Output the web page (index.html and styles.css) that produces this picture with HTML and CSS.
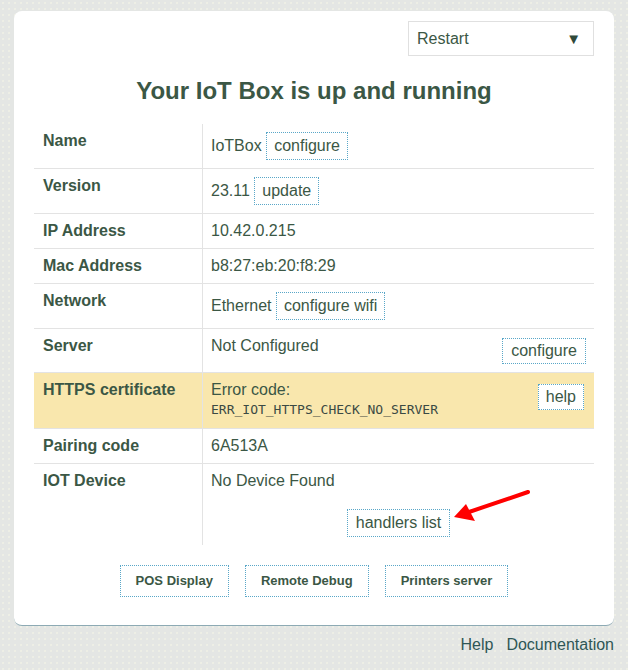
FILE: index.html
```html
<!DOCTYPE html>
<html>
<head>
<meta charset="utf-8">
<link rel="stylesheet" href="styles.css">
</head>
<body>
<div class="card">
  <div class="top">
    <div class="select"><span>Restart</span><span class="caret">▼</span></div>
  </div>
  <h1 class="title">Your IoT Box is up and running</h1>
  <div class="table">
    <div class="row">
      <div class="label">Name</div>
      <div class="val">IoTBox <span class="btn">configure</span></div>
    </div>
    <div class="row">
      <div class="label">Version</div>
      <div class="val">23.11 <span class="btn">update</span></div>
    </div>
    <div class="row">
      <div class="label">IP Address</div>
      <div class="val">10.42.0.215</div>
    </div>
    <div class="row">
      <div class="label">Mac Address</div>
      <div class="val">b8:27:eb:20:f8:29</div>
    </div>
    <div class="row">
      <div class="label">Network</div>
      <div class="val">Ethernet <span class="btn">configure wifi</span></div>
    </div>
    <div class="row">
      <div class="label">Server</div>
      <div class="val"><span class="btn right">configure</span>Not Configured</div>
    </div>
    <div class="row warn">
      <div class="label">HTTPS certificate</div>
      <div class="val"><span class="btn right help">help</span>Error code:<code class="code">ERR_IOT_HTTPS_CHECK_NO_SERVER</code></div>
    </div>
    <div class="row">
      <div class="label">Pairing code</div>
      <div class="val">6A513A</div>
    </div>
    <div class="row last">
      <div class="label">IOT Device</div>
      <div class="val">No Device Found<div class="center"><span class="btn wide">handlers list</span></div></div>
    </div>
  </div>
  <div class="actions">
    <span class="abtn">POS Display</span>
    <span class="abtn">Remote Debug</span>
    <span class="abtn">Printers server</span>
  </div>
</div>
<div class="footer"><a class="link">Help</a><a class="link">Documentation</a></div>
<svg class="arrow" width="90" height="45" viewBox="0 0 90 45">
  <line x1="78" y1="7" x2="16" y2="28" stroke="#ff0000" stroke-width="4" stroke-linecap="round"/>
  <polygon points="4,32 16,19 25,36" fill="#ff0000"/>
</svg>
</body>
</html>
```
FILE: styles.css
```css
html, body {
  margin: 0;
  padding: 0;
}
body {
  background-color: #e4e6e4;
  background-image: radial-gradient(circle, #eeefe6 0.7px, transparent 1px);
  background-size: 6px 6px;
  font-family: "Liberation Sans", Arial, sans-serif;
  font-size: 16px;
  color: #3b5745;
  padding-top: 11px;
  min-height: 659px;
  position: relative;
}
.card {
  width: 600px;
  margin: 0 auto;
  background: #fff;
  border-radius: 8px;
  border-bottom: 1px solid #8daab4;
  box-sizing: border-box;
  padding: 10px 20px 28px;
}
.top {
  display: flex;
  justify-content: flex-end;
}
.select {
  width: 186px;
  height: 35px;
  box-sizing: border-box;
  border: 1px solid #e0e0e0;
  display: flex;
  align-items: center;
  justify-content: space-between;
  padding: 0 12px 0 8px;
  line-height: 18px;
}
.caret {
  font-size: 15px;
  color: #2f4a3a;
}
.title {
  font-size: 24px;
  line-height: 28px;
  font-weight: bold;
  text-align: center;
  margin: 21px 0 19px;
}
.table {
  width: 560px;
}
.row {
  display: grid;
  grid-template-columns: 168px 1fr;
  border-bottom: 1px solid #e3e3e3;
  line-height: 18px;
}
.row.last {
  border-bottom: 0;
}
.row.warn {
  background: #f9e7ad;
}
.label {
  padding: 8px 9px;
  font-weight: bold;
}
.val {
  border-left: 1px solid #e3e3e3;
  padding: 8px;
}
.btn {
  display: inline-block;
  border: 1px dotted #5aa7c8;
  background: #fff;
  padding: 4px 7px;
  line-height: 18px;
}
.btn.wide {
  padding: 4px 8px;
}
.btn.right {
  float: right;
  margin-top: 1px;
  padding: 3px 8px;
}
.btn.help {
  margin-top: 3px;
  margin-right: 2px;
  padding: 3px 7px;
}
.code {
  display: block;
  font-family: "DejaVu Sans Mono", monospace;
  font-size: 13px;
  line-height: 21px;
  color: #3b4a44;
}
.center {
  text-align: center;
  margin-top: 19px;
}
.actions {
  display: flex;
  justify-content: center;
  gap: 16px;
  margin-top: 20px;
}
.abtn {
  display: inline-block;
  border: 1px dotted #5aa7c8;
  font-size: 13px;
  font-weight: bold;
  line-height: 14px;
  padding: 8px 15px;
}
.footer {
  width: 600px;
  margin: 10px auto 0;
  display: flex;
  justify-content: flex-end;
  gap: 13px;
  line-height: 18px;
}
.link {
  color: #2f5656;
}
.arrow {
  position: absolute;
  left: 450px;
  top: 485px;
}
```
